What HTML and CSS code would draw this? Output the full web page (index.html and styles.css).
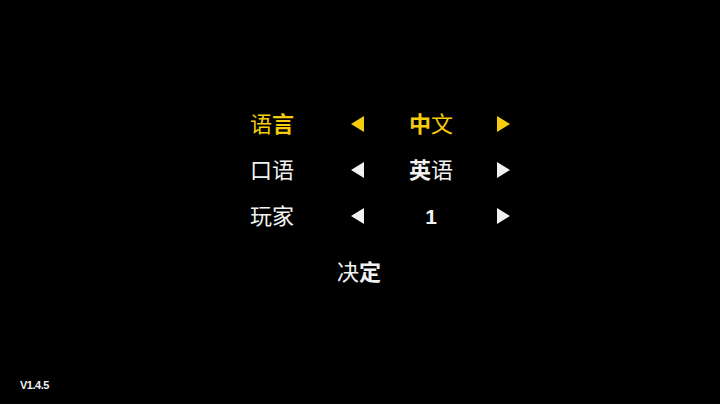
FILE: index.html
```html
<!DOCTYPE html>
<html lang="zh">
<head>
<meta charset="utf-8">
<link rel="stylesheet" href="styles.css">
</head>
<body>
<main class="menu">
  <div class="options">
    <div class="label active"><span>语</span><b>言</b></div>
    <div class="arrow active"><svg width="13" height="16" viewBox="0 0 13 16"><polygon points="13,0 13,16 0,8"/></svg></div>
    <div class="value active"><b>中</b><span>文</span></div>
    <div class="arrow active"><svg width="13" height="16" viewBox="0 0 13 16"><polygon points="0,0 13,8 0,16"/></svg></div>

    <div class="label"><span>口语</span></div>
    <div class="arrow"><svg width="13" height="16" viewBox="0 0 13 16"><polygon points="13,0 13,16 0,8"/></svg></div>
    <div class="value"><b>英</b><span>语</span></div>
    <div class="arrow"><svg width="13" height="16" viewBox="0 0 13 16"><polygon points="0,0 13,8 0,16"/></svg></div>

    <div class="label"><span>玩家</span></div>
    <div class="arrow"><svg width="13" height="16" viewBox="0 0 13 16"><polygon points="13,0 13,16 0,8"/></svg></div>
    <div class="value"><b class="num">1</b></div>
    <div class="arrow"><svg width="13" height="16" viewBox="0 0 13 16"><polygon points="0,0 13,8 0,16"/></svg></div>
  </div>
  <div class="confirm"><span>决</span><b>定</b></div>
</main>
<footer class="version">V1.4.5</footer>
</body>
</html>
```
FILE: styles.css
```css
html, body {
  margin: 0;
  padding: 0;
  width: 720px;
  height: 404px;
  background: #000;
  overflow: hidden;
}
body {
  position: relative;
  font-family: "Noto Sans CJK SC", "Noto Sans", sans-serif;
  color: #f2f2f2;
}
.menu {
  padding-top: 101px;
  display: flex;
  flex-direction: column;
}
.options {
  margin-left: 250px;
  display: grid;
  grid-template-columns: 80px 54px 94px 50px;
  grid-auto-rows: 46px;
  font-size: 22px;
}
.options b, .confirm b {
  font-weight: 700;
}
.options span, .confirm span {
  font-weight: 400;
}
.label {
  white-space: nowrap;
  line-height: 42px;
}
.value {
  text-align: center;
  white-space: nowrap;
  line-height: 42px;
}
.num {
  font-family: "Liberation Sans", sans-serif;
  font-size: 21px;
}
.arrow {
  display: flex;
  align-items: center;
  justify-content: center;
}
.arrow svg {
  fill: #f2f2f2;
}
.active {
  color: #f5cd0c;
}
.arrow.active svg {
  fill: #f5cd0c;
}
.confirm {
  margin-top: 8px;
  margin-left: 337px;
  font-size: 22px;
  line-height: 46px;
}
.version {
  position: absolute;
  left: 20px;
  top: 377px;
  font-family: "Liberation Sans", sans-serif;
  font-weight: 700;
  font-size: 11px;
  letter-spacing: -0.5px;
  line-height: 16px;
  color: #f2f2f2;
}
```
